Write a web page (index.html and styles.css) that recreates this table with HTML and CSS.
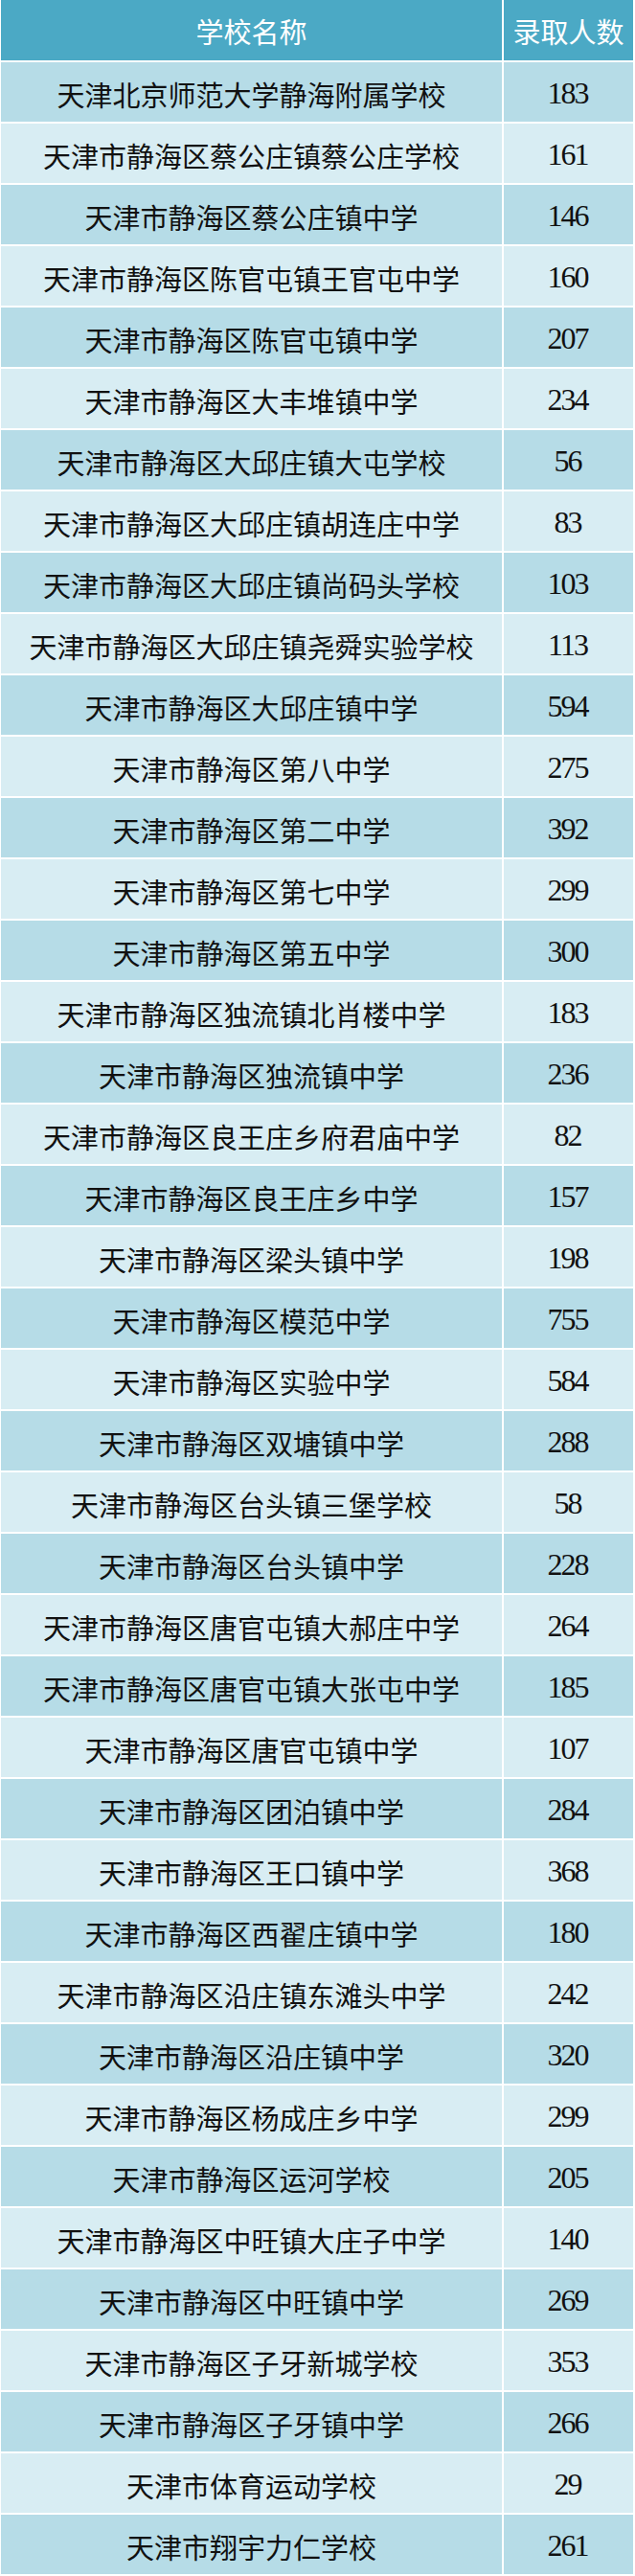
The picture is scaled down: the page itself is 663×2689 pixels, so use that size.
FILE: index.html
```html
<!DOCTYPE html>
<html lang="zh-CN">
<head>
<meta charset="utf-8">
<title>录取人数</title>
<link rel="stylesheet" href="styles.css">
</head>
<body>
<div class="table">
  <div class="cell head">学校名称</div><div class="cell head">录取人数</div>
  <div class="cell name dark">天津北京师范大学静海附属学校</div><div class="cell num dark">183</div>
  <div class="cell name light">天津市静海区蔡公庄镇蔡公庄学校</div><div class="cell num light">161</div>
  <div class="cell name dark">天津市静海区蔡公庄镇中学</div><div class="cell num dark">146</div>
  <div class="cell name light">天津市静海区陈官屯镇王官屯中学</div><div class="cell num light">160</div>
  <div class="cell name dark">天津市静海区陈官屯镇中学</div><div class="cell num dark">207</div>
  <div class="cell name light">天津市静海区大丰堆镇中学</div><div class="cell num light">234</div>
  <div class="cell name dark">天津市静海区大邱庄镇大屯学校</div><div class="cell num dark">56</div>
  <div class="cell name light">天津市静海区大邱庄镇胡连庄中学</div><div class="cell num light">83</div>
  <div class="cell name dark">天津市静海区大邱庄镇尚码头学校</div><div class="cell num dark">103</div>
  <div class="cell name light">天津市静海区大邱庄镇尧舜实验学校</div><div class="cell num light">113</div>
  <div class="cell name dark">天津市静海区大邱庄镇中学</div><div class="cell num dark">594</div>
  <div class="cell name light">天津市静海区第八中学</div><div class="cell num light">275</div>
  <div class="cell name dark">天津市静海区第二中学</div><div class="cell num dark">392</div>
  <div class="cell name light">天津市静海区第七中学</div><div class="cell num light">299</div>
  <div class="cell name dark">天津市静海区第五中学</div><div class="cell num dark">300</div>
  <div class="cell name light">天津市静海区独流镇北肖楼中学</div><div class="cell num light">183</div>
  <div class="cell name dark">天津市静海区独流镇中学</div><div class="cell num dark">236</div>
  <div class="cell name light">天津市静海区良王庄乡府君庙中学</div><div class="cell num light">82</div>
  <div class="cell name dark">天津市静海区良王庄乡中学</div><div class="cell num dark">157</div>
  <div class="cell name light">天津市静海区梁头镇中学</div><div class="cell num light">198</div>
  <div class="cell name dark">天津市静海区模范中学</div><div class="cell num dark">755</div>
  <div class="cell name light">天津市静海区实验中学</div><div class="cell num light">584</div>
  <div class="cell name dark">天津市静海区双塘镇中学</div><div class="cell num dark">288</div>
  <div class="cell name light">天津市静海区台头镇三堡学校</div><div class="cell num light">58</div>
  <div class="cell name dark">天津市静海区台头镇中学</div><div class="cell num dark">228</div>
  <div class="cell name light">天津市静海区唐官屯镇大郝庄中学</div><div class="cell num light">264</div>
  <div class="cell name dark">天津市静海区唐官屯镇大张屯中学</div><div class="cell num dark">185</div>
  <div class="cell name light">天津市静海区唐官屯镇中学</div><div class="cell num light">107</div>
  <div class="cell name dark">天津市静海区团泊镇中学</div><div class="cell num dark">284</div>
  <div class="cell name light">天津市静海区王口镇中学</div><div class="cell num light">368</div>
  <div class="cell name dark">天津市静海区西翟庄镇中学</div><div class="cell num dark">180</div>
  <div class="cell name light">天津市静海区沿庄镇东滩头中学</div><div class="cell num light">242</div>
  <div class="cell name dark">天津市静海区沿庄镇中学</div><div class="cell num dark">320</div>
  <div class="cell name light">天津市静海区杨成庄乡中学</div><div class="cell num light">299</div>
  <div class="cell name dark">天津市静海区运河学校</div><div class="cell num dark">205</div>
  <div class="cell name light">天津市静海区中旺镇大庄子中学</div><div class="cell num light">140</div>
  <div class="cell name dark">天津市静海区中旺镇中学</div><div class="cell num dark">269</div>
  <div class="cell name light">天津市静海区子牙新城学校</div><div class="cell num light">353</div>
  <div class="cell name dark">天津市静海区子牙镇中学</div><div class="cell num dark">266</div>
  <div class="cell name light">天津市体育运动学校</div><div class="cell num light">29</div>
  <div class="cell name dark">天津市翔宇力仁学校</div><div class="cell num dark">261</div>
</div>
</body>
</html>
```

FILE: styles.css
```css
html, body {
  margin: 0;
  padding: 0;
  background: #ffffff;
}

.table {
  width: 663px;
  box-sizing: border-box;
  display: grid;
  grid-template-columns: 523px 135px;
  grid-template-rows: 63px;
  grid-auto-rows: 62px;
  column-gap: 2px;
  row-gap: 2px;
  padding: 0 2px 2px 1px;
  font-family: "Noto Sans CJK SC", "Liberation Serif", serif;
  font-size: 29px;
  color: #111111;
}

.cell {
  display: flex;
  align-items: center;
  justify-content: center;
  padding-top: 3px;
  box-sizing: border-box;
  white-space: nowrap;
}

.head {
  background: #4ba9c5;
  color: #ffffff;
  padding-top: 0;
}

.dark {
  background: #b6dce7;
}

.light {
  background: #d8edf3;
}

.num {
  font-family: "Liberation Serif", serif;
  font-size: 32px;
  letter-spacing: -2px;
  padding-right: 2px;
}
```
